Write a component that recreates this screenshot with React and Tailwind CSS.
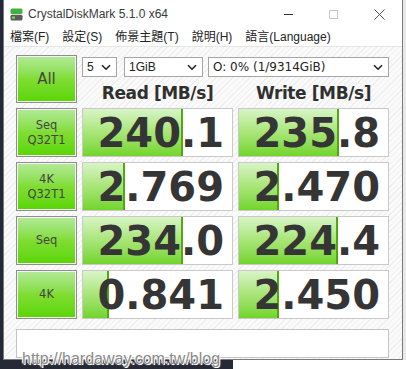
import React from "react";

const rows = [
  { l1: "Seq", l2: "Q32T1", read: "240.1", rw: 101, write: "235.8", ww: 101 },
  { l1: "4K", l2: "Q32T1", read: "2.769", rw: 43, write: "2.470", ww: 41 },
  { l1: "Seq", read: "234.0", rw: 101, write: "224.4", ww: 100 },
  { l1: "4K", read: "0.841", rw: 27, write: "2.450", ww: 41 },
];

const menus = ["檔案(F)", "設定(S)", "佈景主題(T)", "說明(H)", "語言(Language)"];

function Chevron() {
  return (
    <svg width="10" height="7" viewBox="0 0 10 7" className="shrink-0">
      <polyline points="1,1.2 5,5.2 9,1.2" fill="none" stroke="#222" strokeWidth="1.6" />
    </svg>
  );
}

function Select({ value, className }) {
  return (
    <div className={`h-[20px] bg-white border border-[#a6a6a6] flex items-center justify-between pl-[4px] pr-[5px] text-[12px] text-[#222] ${className}`}>
      <span className="leading-none">{value}</span>
      <Chevron />
    </div>
  );
}

function GreenButton({ children }) {
  return (
    <div className="border border-[#8e8e8e] p-px bg-[#f4f4f4]">
      <div className="h-full w-full bg-linear-to-b from-[#b2e994] via-[#80dd30] to-[#5ad600] flex flex-col items-center justify-center text-[#454545]">
        {children}
      </div>
    </div>
  );
}

function Cell({ value, width }) {
  return (
    <div className="relative border border-[#c9c9c9] bg-white flex items-center justify-end pr-[8px] overflow-hidden">
      <div
        className="absolute left-0 top-0 bottom-0 bg-linear-to-b from-[#d8f5c6] via-[#a8e576] to-[#72d526] border-r-2 border-[#52a812]"
        style={{ width: width - 1 }}
      />
      <span className="relative font-['DejaVu_Sans',sans-serif] font-bold text-[40px] leading-none text-[#353535]">
        {value}
      </span>
    </div>
  );
}

export default function App() {
  return (
    <div className="relative w-[406px] h-[369px] overflow-hidden flex flex-col bg-[#20232f] font-['Liberation_Sans','Noto_Sans_CJK_TC',sans-serif]">
      <div className="flex h-[360px]">
        <div className="w-[3px] bg-[#23283a]" />

        {/* Window */}
        <div className="w-[400px] h-full bg-white border-x border-b border-[#7a7a7a] flex flex-col">
          {/* Title bar */}
          <div className="h-[28px] flex items-center pl-[6px] shrink-0">
            <svg width="13" height="13" viewBox="0 0 13 13" className="shrink-0">
              <rect x="0.5" y="0.5" width="12" height="5.5" rx="1.5" fill="#3cb43c" />
              <rect x="0.5" y="6.8" width="12" height="5.8" rx="1.5" fill="#5a5a5a" />
              <rect x="2" y="8.6" width="3" height="2" fill="#7ee05a" />
            </svg>
            <span className="ml-[5px] text-[12px] text-[#3a3a3a] leading-none">CrystalDiskMark 5.1.0 x64</span>
            <div className="ml-auto flex items-center h-full">
              <div className="w-[9px] h-px bg-[#333] mr-[36px]" />
              <div className="w-[9px] h-[9px] border border-[#c8c8c8] mr-[36px]" />
              <svg width="11" height="11" viewBox="0 0 11 11" className="mr-[17px]">
                <path d="M0.5 0.5 L10.5 10.5 M10.5 0.5 L0.5 10.5" stroke="#555" strokeWidth="1" />
              </svg>
            </div>
          </div>

          {/* Menu bar */}
          <div className="h-[19px] flex items-center pl-[6px] gap-[13px] border-b border-[#e6e6e6] text-[12px] text-[#222] leading-none shrink-0">
            {menus.map((m) => (
              <span key={m}>{m}</span>
            ))}
          </div>

          {/* Content */}
          <div className="flex-1 pl-[12px] pt-[8px] bg-[repeating-linear-gradient(135deg,#fafafa_0px,#fafafa_3px,#efefef_3px,#efefef_4px)]">
            <div className="grid grid-cols-[61px_151px_151px] grid-rows-[48px_49px_49px_49px_49px] gap-[5px]">
              <GreenButton>
                <span className="font-['DejaVu_Sans',sans-serif] text-[15px] leading-none">All</span>
              </GreenButton>

              <div className="col-span-2 flex flex-col pt-[2px]">
                <div className="flex">
                  <Select value="5" className="w-[35px]" />
                  <Select value="1GiB" className="w-[79px] ml-[7px]" />
                  <Select value="O: 0% (1/9314GiB)" className="w-[181px] ml-[5px] font-['DejaVu_Sans',sans-serif]" />
                </div>
                <div className="grid grid-cols-[151px_151px] gap-x-[5px] mt-[8px] font-['DejaVu_Sans',sans-serif] font-bold text-[17px] tracking-[-0.4px] leading-none text-[#303030]">
                  <div className="text-center">Read [MB/s]</div>
                  <div className="text-center">Write [MB/s]</div>
                </div>
              </div>

              {rows.map((r, i) => (
                <React.Fragment key={i}>
                  <GreenButton>
                    <span className="font-['DejaVu_Sans',sans-serif] text-[11.5px] leading-[15px]">{r.l1}</span>
                    {r.l2 && (
                      <span className="font-['DejaVu_Sans',sans-serif] text-[11.5px] leading-[15px]">{r.l2}</span>
                    )}
                  </GreenButton>
                  <Cell value={r.read} width={r.rw} />
                  <Cell value={r.write} width={r.ww} />
                </React.Fragment>
              ))}
            </div>

            {/* Comment box */}
            <div className="mt-[10px] w-[373px] h-[29px] bg-white border border-[#c4c4c4]" />
          </div>
        </div>

        <div className="flex-1 bg-[#e9e9e9]" />
      </div>

      <div className="flex flex-1">
        <div className="w-[233px] bg-[#262a36]" />
        <div className="flex-1 bg-white" />
      </div>

      {/* Watermark */}
      <div className="absolute left-[22px] top-[351px] text-[16px] leading-none text-[#8a8a8a] [text-shadow:0_0_1px_#fff,0_0_2px_#fff,1px_1px_0_#fff,-1px_-1px_0_#fff] font-['Liberation_Sans',sans-serif]">
        http://hardaway.com.tw/blog
      </div>
    </div>
  );
}
